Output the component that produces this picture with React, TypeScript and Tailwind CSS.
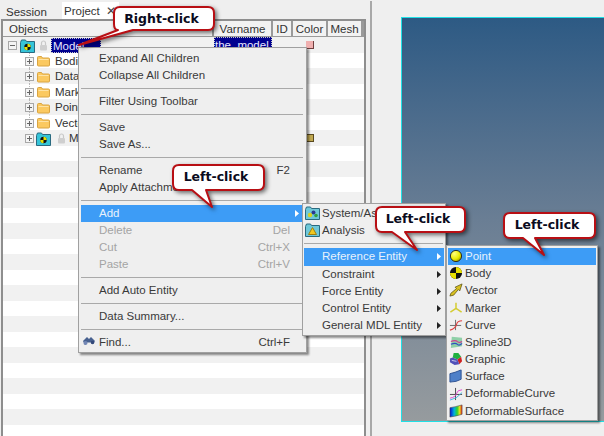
const FONT = "font-['Liberation_Sans',Arial,sans-serif]";

function Expander({ minus }: { minus?: boolean }) {
  return (
    <svg width="9" height="9" viewBox="0 0 9 9" className="shrink-0 relative">
      <rect x="0.5" y="0.5" width="8" height="8" fill="#f4f4f4" stroke="#a8a8a8" />
      <path d="M2 4.5h5" stroke="#666" />
      {!minus && <path d="M4.5 2v5" stroke="#666" />}
    </svg>
  );
}

function Folder() {
  return (
    <svg width="13" height="12" viewBox="0 0 13 12" className="shrink-0">
      <path d="M.5 2.5q0-1 1-1h3l1 1.5h6q1 0 1 1v6q0 1-1 1h-10q-1 0-1-1z" fill="#fbc960" stroke="#d9a441" />
      <path d="M1.5 4.5h10" stroke="#fde3a6" />
    </svg>
  );
}

function Lock() {
  return (
    <svg width="9" height="11" viewBox="0 0 9 11" className="shrink-0">
      <path d="M2.5 5V3a2 2 0 0 1 4 0v2" fill="none" stroke="#c8c8c8" strokeWidth="1.2" />
      <rect x="1" y="5" width="7" height="5.5" rx="1" fill="#cfcfcf" />
    </svg>
  );
}

function Dummy({ x, y, r }: { x: number; y: number; r: number }) {
  return (
    <g>
      <circle cx={x} cy={y} r={r} fill="#111" />
      <path d={`M${x} ${y}V${y - r}A${r} ${r} 0 0 1 ${x + r} ${y}ZM${x} ${y}V${y + r}A${r} ${r} 0 0 1 ${x - r} ${y}Z`} fill="#e8e000" />
    </g>
  );
}

function ModelIcon() {
  return (
    <svg width="15" height="14" viewBox="0 0 15 14" className="shrink-0">
      <path d="M.5 3.500v10h14v-11h-8l-1-1.500h-4z" fill="#35c4d8" stroke="#2a6a80" />
      <Dummy x={7.5} y={8} r={3.2} />
    </svg>
  );
}

function SystemIcon() {
  return (
    <svg width="15" height="14" viewBox="0 0 15 14" className="shrink-0">
      <path d="M.5 3.500v10h14v-11h-8l-1-1.500h-4z" fill="#6fc8d8" stroke="#2a6a80" />
      <circle cx="5" cy="9" r="2.200" fill="#d8d020" />
      <circle cx="8.500" cy="6.500" r="2" fill="#2a3a90" />
      <circle cx="11" cy="9.500" r="1.800" fill="#30a040" />
    </svg>
  );
}

function AnalysisIcon() {
  return (
    <svg width="15" height="14" viewBox="0 0 15 14" className="shrink-0">
      <path d="M.5 3.500v10h14v-11h-8l-1-1.500h-4z" fill="#6fc8d8" stroke="#2a6a80" />
      <path d="M7.500 4.500l4 7h-8z" fill="#f0c820" stroke="#a08010" />
    </svg>
  );
}

function BinocularIcon() {
  return (
    <svg width="14" height="12" viewBox="0 0 14 12" className="shrink-0">
      <path d="M1 6l4-4 2 2 2-2 4 4-2 3-3-2-1 1-1-1-3 3z" fill="#47608f" />
      <circle cx="3.500" cy="8" r="2" fill="#7387b5" />
      <circle cx="10.500" cy="7.500" r="1.800" fill="#33497a" />
    </svg>
  );
}

function ShapeIcon({ name }: { name: string }) {
  return (
    <svg width="14" height="14" viewBox="0 0 15 15" className="shrink-0">
      {name === "point" && (
        <>
          <defs>
            <radialGradient id="ball" cx="0.35" cy="0.3" r="0.8">
              <stop offset="0" stopColor="#ffff80" />
              <stop offset="0.6" stopColor="#eaea00" />
              <stop offset="1" stopColor="#8a8a00" />
            </radialGradient>
          </defs>
          <circle cx="7.500" cy="7.500" r="6" fill="url(#ball)" stroke="#222" />
        </>
      )}
      {name === "body" && <Dummy x={7.500} y={7.500} r={6.500} />}
      {name === "vector" && (
        <path d="M1 14l1-3 6-5-1.500-1.500L14 1l-2.500 7.500L10 7l-5 6z" fill="#d8c020" stroke="#5a5010" strokeWidth="0.8" />
      )}
      {name === "marker" && (
        <path d="M7.500 8V2M7.500 8l-6 4M7.500 8l6 4" fill="none" stroke="#d4cc30" strokeWidth="1.600" />
      )}
      {name === "curve" && (
        <>
          <path d="M7 2v11M1 8h12" stroke="#666" />
          <path d="M1 13Q7 11 8 7T14 3" fill="none" stroke="#e04040" strokeWidth="1.200" />
        </>
      )}
      {name === "spline" && (
        <>
          <path d="M3 2l11 1v9L2 14z" fill="#8fd0a8" />
          <path d="M2 7q5-2 7 0t5 0" fill="none" stroke="#d04090" strokeWidth="1.200" />
          <path d="M2 10q5-2 7 0t5-1" fill="none" stroke="#3050c0" strokeWidth="1.200" />
        </>
      )}
      {name === "graphic" && (
        <>
          <path d="M5 1l5 0 3 4-4 3-5-2z" fill="#20b040" />
          <path d="M9 8l4-3 1 5-3 3z" fill="#d02020" />
          <path d="M1 7l3-1 5 2 2 5-5 1-5-3z" fill="#5050b8" />
          <path d="M3 9l5 1" stroke="#c8c8f0" />
        </>
      )}
      {name === "surface" && <path d="M1 5q5-1 12-4v10q-5 3-12 3z" fill="#4f80c8" stroke="#2a4f90" />}
      {name === "defcurve" && (
        <>
          <path d="M7 1v13M1 8h13" stroke="#444" />
          <path d="M1 12Q7 11 8 7T14 3" fill="none" stroke="#e040d0" />
          <path d="M1 14Q8 13 14 6" fill="none" stroke="#40b0e0" />
        </>
      )}
      {name === "defsurface" && (
        <>
          <defs>
            <linearGradient id="rainbow" x1="0" x2="1" y1="0" y2="0">
              <stop offset="0" stopColor="#0010d0" />
              <stop offset="0.35" stopColor="#00b0e0" />
              <stop offset="0.6" stopColor="#30d030" />
              <stop offset="0.8" stopColor="#e8e020" />
              <stop offset="1" stopColor="#e02020" />
            </linearGradient>
          </defs>
          <path d="M1 4q6-1 13-3v10q-6 2-13 3z" fill="url(#rainbow)" stroke="#444" strokeWidth="0.600" />
        </>
      )}
    </svg>
  );
}

function TreeRow({ striped, children, swatch }: { striped?: boolean; children?: React.ReactNode; swatch?: string }) {
  return (
    <div className={`h-[15.5px] shrink-0 flex items-center relative pt-[2px] ${striped ? "bg-[#f1f1f1]" : "bg-white"}`}>
      {children}
      {swatch === "pink" && <span className="absolute left-[303px] top-[4px] w-[8px] h-[8px] bg-[#f0b0b0] border-r border-b border-[#704040]" />}
      {swatch === "tan" && <span className="absolute left-[303px] top-[4px] w-[8px] h-[8px] bg-[#c0a850] border border-[#5a4a20]" />}
    </div>
  );
}

function FolderRow({ label, striped }: { label: string; striped?: boolean }) {
  return (
    <TreeRow striped={striped}>
      <span className="absolute left-[26px] top-0 bottom-0 border-l border-dotted border-[#b8b8b8]" />
      <span className="w-[22px]" />
      <Expander />
      <span className="w-[3px]" />
      <Folder />
      <span className="ml-[5px] text-[#333]">{label}</span>
    </TreeRow>
  );
}

function Head({ label, w }: { label: string; w: string }) {
  return (
    <div className={`${w} shrink-0 h-[15px] pt-[2px] bg-[#f2f2f2] border-r-2 border-[#9a9a9a] flex items-center justify-center text-[#333]`}>
      {label}
    </div>
  );
}

function Sep() {
  return (
    <div className="h-[9px] flex items-center pr-[1px]">
      <div className="w-full h-[1px] bg-[#a9a9a9]" />
    </div>
  );
}

function Item({
  label, shortcut, disabled, active, arrow, icon, inset = "pl-[18px]", height = "h-[17px]", arrowGap = "mr-[3px]",
}: {
  label: string; shortcut?: string; disabled?: boolean; active?: boolean; arrow?: boolean; icon?: React.ReactNode; inset?: string; height?: string; arrowGap?: string;
}) {
  const color = active ? "bg-[#3d9cf6] text-[#e8f2fc]" : disabled ? "text-[#a4a4a4]" : "text-[#3a3a3a]";
  return (
    <div className={`${height} flex items-center relative ${inset} ${color}`}>
      {icon && <span className="absolute left-[1px] top-[1px] flex items-center">{icon}</span>}
      <span className="whitespace-nowrap">{label}</span>
      {shortcut && <span className="ml-auto pr-[14px]">{shortcut}</span>}
      {arrow && (
        <svg width="4" height="7" viewBox="0 0 4 7" className={`ml-auto ${arrowGap}`}>
          <path d="M0 0l4 3.500L0 7z" fill={active ? "#fff" : "#222"} />
        </svg>
      )}
    </div>
  );
}

function Callout({ className, w, h, tail, text }: { className: string; w: number; h: number; tail: string; text: string }) {
  return (
    <div className={`absolute ${className}`}>
      <svg width={w} height={h} viewBox={`0 0 ${w} ${h}`} className="absolute left-0 top-0 overflow-visible drop-shadow-[2px_2px_2px_rgba(0,0,0,0.55)]">
        <path d={tail} fill="#fff" stroke="#b80f14" strokeWidth="2" strokeLinejoin="round" />
      </svg>
      <span className="absolute inset-x-0 top-[5px] pr-[5px] text-center font-['DejaVu_Sans',sans-serif] font-bold text-[12.5px] leading-[16px] text-[#0b0b20]">
        {text}
      </span>
    </div>
  );
}

export default function App() {
  return (
    <div className={`relative w-[604px] h-[436px] overflow-hidden bg-[#efefef] text-[11.5px] ${FONT}`}>
      <div className="flex h-full">
        <div className="w-[366px] shrink-0 flex flex-col pl-[1px] pt-[3px]">
          <div className="flex items-end h-[16px] pl-[4px] text-[#333] text-[11.5px]">
            <div className="w-[57px] h-[15px] pl-[1px] pt-[2px] flex items-center">Session</div>
            <div className="w-[57px] h-[17px] bg-white pl-[2px] pt-[2px] flex items-center">
              Project
              <span className="ml-[6px] text-[#444]">✕</span>
            </div>
          </div>
          <div className="flex-1 flex flex-col border-l-2 border-r-2 border-t-2 border-[#8e8e8e] min-h-0">
            <div className="flex h-[16px] shrink-0 bg-[#9a9a9a] border-b border-[#9a9a9a]">
              <div className="w-[211px] shrink-0 bg-[#f2f2f2] border-r-2 border-[#9a9a9a] pl-[6px] pt-[2px] flex items-center text-[#333]">Objects</div>
              <Head label="Varname" w="w-[59px]" />
              <Head label="ID" w="w-[20px]" />
              <Head label="Color" w="w-[35px]" />
              <Head label="Mesh" w="w-[35px]" />
            </div>
            <TreeRow striped swatch="pink">
              <span className="w-[5px]" />
              <Expander minus />
              <span className="w-[3px]" />
              <ModelIcon />
              <span className="w-[4px]" />
              <Lock />
              <span className="ml-[3px] w-[50px] h-[15px] pl-[2px] pt-[2px] bg-[#00008f] text-[#e8e8ff] flex items-center outline-1 outline-dotted outline-[#c8c8c8] -outline-offset-1">Model</span>
              <span className="absolute left-[211px] top-0 w-[58px] h-[15px] bg-[#00008f] text-[#e8e8ff] flex items-center pl-[1px] pt-[2px] outline-1 outline-dotted outline-[#c8c8c8] -outline-offset-1">the_model</span>
            </TreeRow>
            <FolderRow label="Bodies" />
            <FolderRow label="Datasets" striped />
            <FolderRow label="Markers" />
            <FolderRow label="Points" striped />
            <FolderRow label="Vectors" />
            <TreeRow striped swatch="tan">
              <span className="w-[22px]" />
              <Expander />
              <span className="w-[2px]" />
              <ModelIcon />
              <span className="w-[6px]" />
              <Lock />
              <span className="ml-[3px] text-[#333]">Model</span>
            </TreeRow>
            {Array.from({ length: 19 }, (_, i) => (
              <TreeRow key={i} striped={i % 2 === 1} />
            ))}
          </div>
        </div>
        <div className="ml-[4px] w-[2px] bg-[#a8a8a8] mt-[1px]" />
        <div className="ml-[29px] flex-1 mt-[17px] mb-[14px] border-l border-t border-b border-[#1fe0e6] bg-gradient-to-b from-[#2d5a84] via-[#6a7e94] to-[#969b9e]" />
      </div>

      <div className="absolute left-[78px] top-[47px] w-[229px] h-[306px] bg-[#efefef] border border-[#a0a0a0] pt-[2px] px-[2px] shadow-[2px_2px_2px_rgba(0,0,0,0.45)]">
        <Item label="Expand All Children" />
        <Item label="Collapse All Children" />
        <Sep />
        <Item label="Filter Using Toolbar" />
        <Sep />
        <Item label="Save" />
        <Item label="Save As..." />
        <Sep />
        <Item label="Rename" shortcut="F2" />
        <Item label="Apply Attachments" />
        <Sep />
        <Item label="Add" active arrow arrowGap="mr-[5px]" />
        <Item label="Delete" shortcut="Del" disabled />
        <Item label="Cut" shortcut="Ctrl+X" disabled />
        <Item label="Paste" shortcut="Ctrl+V" disabled />
        <Sep />
        <Item label="Add Auto Entity" />
        <Sep />
        <Item label="Data Summary..." />
        <Sep />
        <Item label="Find..." shortcut="Ctrl+F" icon={<BinocularIcon />} />
      </div>

      <div className="absolute left-[302px] top-[203px] w-[144px] h-[133px] bg-[#efefef] border border-[#a0a0a0] pt-[1px] px-[1px] shadow-[2px_2px_2px_rgba(0,0,0,0.45)]">
        <Item label="System/Assembly" icon={<SystemIcon />} height="h-[17.2px]" />
        <Item label="Analysis" icon={<AnalysisIcon />} height="h-[17.2px]" />
        <Sep />
        <Item label="Reference Entity" active arrow height="h-[17.2px]" />
        <Item label="Constraint" arrow height="h-[17.2px]" />
        <Item label="Force Entity" arrow height="h-[17.2px]" />
        <Item label="Control Entity" arrow height="h-[17.2px]" />
        <Item label="General MDL Entity" arrow height="h-[17.2px]" />
      </div>

      <div className="absolute left-[446px] top-[245px] w-[152px] h-[176px] bg-[#efefef] border border-[#a0a0a0] pt-[2px] px-[1px] shadow-[2px_2px_2px_rgba(0,0,0,0.45)]">
        <Item label="Point" active icon={<ShapeIcon name="point" />} inset="pl-[17px]" height="h-[17.2px]" />
        <Item label="Body" icon={<ShapeIcon name="body" />} inset="pl-[17px]" height="h-[17.2px]" />
        <Item label="Vector" icon={<ShapeIcon name="vector" />} inset="pl-[17px]" height="h-[17.2px]" />
        <Item label="Marker" icon={<ShapeIcon name="marker" />} inset="pl-[17px]" height="h-[17.2px]" />
        <Item label="Curve" icon={<ShapeIcon name="curve" />} inset="pl-[17px]" height="h-[17.2px]" />
        <Item label="Spline3D" icon={<ShapeIcon name="spline" />} inset="pl-[17px]" height="h-[17.2px]" />
        <Item label="Graphic" icon={<ShapeIcon name="graphic" />} inset="pl-[17px]" height="h-[17.2px]" />
        <Item label="Surface" icon={<ShapeIcon name="surface" />} inset="pl-[17px]" height="h-[17.2px]" />
        <Item label="DeformableCurve" icon={<ShapeIcon name="defcurve" />} inset="pl-[17px]" height="h-[17.2px]" />
        <Item label="DeformableSurface" icon={<ShapeIcon name="defsurface" />} inset="pl-[17px]" height="h-[17.2px]" />
      </div>

      <Callout
        className="left-[113px] top-[6px] w-[102px] h-[25px]"
        w={102}
        h={25}
        text="Right-click"
        tail="M7 1H95Q101 1 101 7V18Q101 24 95 24H20L-34 39L5 24Q1 24 1 18V7Q1 1 7 1Z"
      />
      <Callout
        className="left-[172px] top-[164px] w-[93px] h-[27px]"
        w={93}
        h={27}
        text="Left-click"
        tail="M7 1H86Q92 1 92 7V20Q92 26 86 26H34L40 43L20 26H7Q1 26 1 20V7Q1 1 7 1Z"
      />
      <Callout
        className="left-[375px] top-[206px] w-[91px] h-[27px]"
        w={91}
        h={27}
        text="Left-click"
        tail="M7 1H84Q90 1 90 7V20Q90 26 84 26H30L42 44L17 26H7Q1 26 1 20V7Q1 1 7 1Z"
      />
      <Callout
        className="left-[503px] top-[212px] w-[93px] h-[27px]"
        w={93}
        h={27}
        text="Left-click"
        tail="M7 1H86Q92 1 92 7V20Q92 26 86 26H32L41 43L20 26H7Q1 26 1 20V7Q1 1 7 1Z"
      />
    </div>
  );
}
